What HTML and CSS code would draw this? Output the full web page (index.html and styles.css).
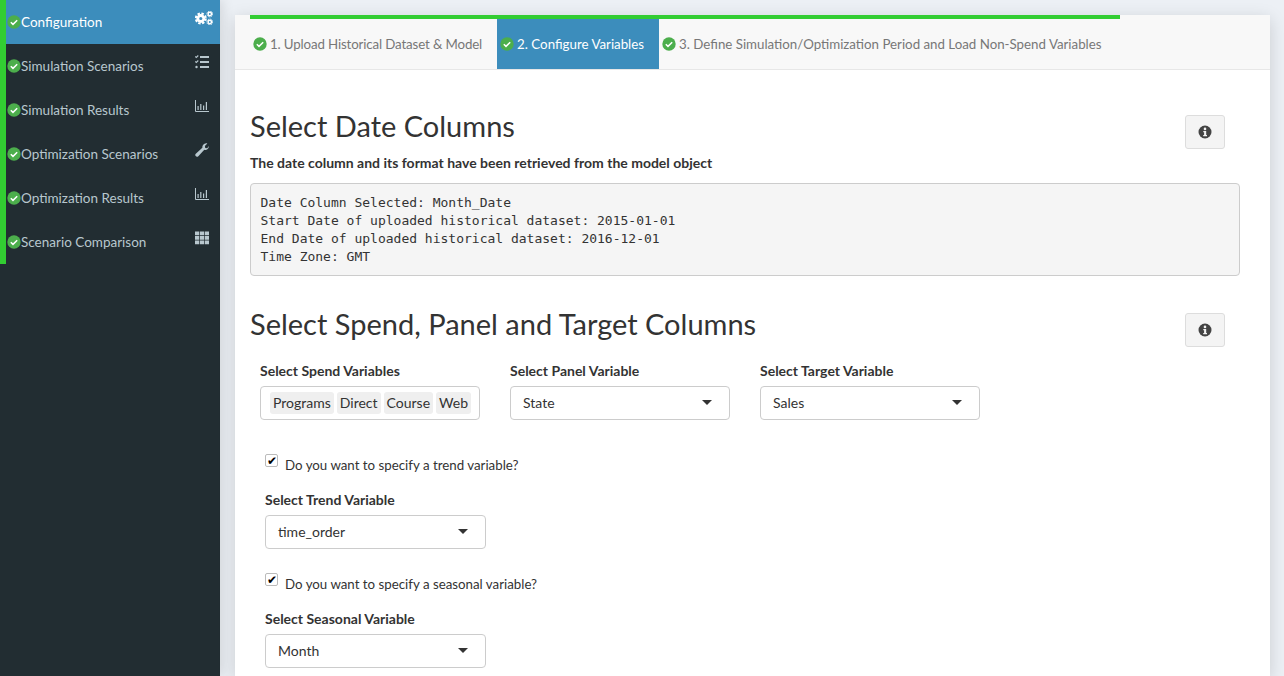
FILE: index.html
```html
<!DOCTYPE html>
<html lang="en">
<head>
    <meta charset="UTF-8">
    <title>Configure Variables</title>
    <link rel="stylesheet" href="styles.css">
</head>
<body>
    <svg class="defs" width="0" height="0">
        <symbol id="ok" viewBox="0 0 14 14">
            <circle cx="7" cy="7" r="6.7" fill="#4cae4c"/>
            <path d="M3.800 7.200l2.200 2.200 4.200-4.200" fill="none" stroke="#fff" stroke-width="1.500"/>
        </symbol>
        <symbol id="chart" viewBox="0 0 18 14" preserveAspectRatio="xMinYMid meet">
            <path fill="none" stroke="currentColor" d="M.5 1v11.500H14"/>
            <path fill="currentColor" d="M2.500 7h1.200v4H2.500zM5.200 5h1.200v6H5.200zM8 6.500h1.200V11H8zM10.800 3h1.200v8h-1.200z"/>
        </symbol>
        <symbol id="info" viewBox="0 0 14 14">
            <circle cx="7" cy="7" r="6.500" fill="currentColor"/>
            <circle cx="7" cy="3.900" r="1.300" fill="#f4f4f4"/>
            <path fill="#f4f4f4" d="M5.300 6h2.900v4h.8v1.300H5.200V10h.9V7.300h-.8z"/>
        </symbol>
    </svg>

    <aside class="sidebar">
        <ul class="menu">
            <li class="menu-item active">
                <svg class="ok"><use href="#ok"/></svg><span class="menu-text">Configuration</span>
                <svg class="menu-icon" viewBox="0 0 18 14" preserveAspectRatio="xMinYMid meet">
                    <g fill="none" stroke="currentColor">
                        <circle cx="5.800" cy="7.500" r="3" stroke-width="2.800"/>
                        <circle cx="5.800" cy="7.500" r="5" stroke-width="2" stroke-dasharray="2.400 1.527"/>
                        <circle cx="14.800" cy="3" r="1.700" stroke-width="1.500"/>
                        <circle cx="14.800" cy="3" r="2.900" stroke-width="1" stroke-dasharray="1.300 1"/>
                        <circle cx="14.800" cy="11" r="1.700" stroke-width="1.500"/>
                        <circle cx="14.800" cy="11" r="2.900" stroke-width="1" stroke-dasharray="1.300 1"/>
                    </g>
                </svg>
            </li>
            <li class="menu-item">
                <svg class="ok"><use href="#ok"/></svg><span class="menu-text">Simulation Scenarios</span>
                <svg class="menu-icon" viewBox="0 0 18 14" preserveAspectRatio="xMinYMid meet">
                    <path fill="currentColor" d="M5 1h9v2H5zM5 6h9v2H5zM5 11h9v2H5z"/>
                    <path fill="none" stroke="currentColor" stroke-width="1.100" d="M.3 1.500l1 1 2-2M.3 6.500l1 1 2-2"/>
                    <circle cx="1.500" cy="12" r="1.200" fill="currentColor"/>
                </svg>
            </li>
            <li class="menu-item">
                <svg class="ok"><use href="#ok"/></svg><span class="menu-text">Simulation Results</span>
                <svg class="menu-icon"><use href="#chart"/></svg>
            </li>
            <li class="menu-item">
                <svg class="ok"><use href="#ok"/></svg><span class="menu-text">Optimization Scenarios</span>
                <svg class="menu-icon" viewBox="0 0 18 14" preserveAspectRatio="xMinYMid meet">
                    <path fill="currentColor" transform="scale(.875)" d="M15.700 3.500c.4 2-1.100 4.300-3.500 4.400-.6 0-1.100-.1-1.600-.3L3.800 15c-1 1-2.300.8-3-.1-.7-.8-.7-1.900.1-2.700l7.500-6.800c-.3-2.300 1.500-4.900 4.400-5 .5 0 1 .1 1.300.2l-2.800 2.700.4 2.300 2.300.5z"/>
                </svg>
            </li>
            <li class="menu-item">
                <svg class="ok"><use href="#ok"/></svg><span class="menu-text">Optimization Results</span>
                <svg class="menu-icon"><use href="#chart"/></svg>
            </li>
            <li class="menu-item">
                <svg class="ok"><use href="#ok"/></svg><span class="menu-text">Scenario Comparison</span>
                <svg class="menu-icon" viewBox="0 0 18 14" preserveAspectRatio="xMinYMid meet">
                    <path fill="currentColor" d="M0 .5h4.200v3.700H0zM4.900 .5h4.200v3.700H4.900zM9.800 .5H14v3.700H9.800zM0 5h4.200v3.700H0zM4.900 5h4.200v3.700H4.900zM9.800 5H14v3.700H9.800zM0 9.500h4.200v3.700H0zM4.900 9.500h4.200v3.700H4.900zM9.800 9.500H14v3.700H9.800z"/>
                </svg>
            </li>
        </ul>
    </aside>

    <main class="main">
        <div class="card">
            <div class="steps">
                <div class="progress"></div>
                <div class="step-row">
                    <div class="step step-first"><svg class="ok"><use href="#ok"/></svg><span class="step-text">1. Upload Historical Dataset &amp; Model</span></div>
                    <div class="step active"><svg class="ok"><use href="#ok"/></svg><span class="step-text">2. Configure Variables</span></div>
                    <div class="step"><svg class="ok"><use href="#ok"/></svg><span class="step-text">3. Define Simulation/Optimization Period and Load Non-Spend Variables</span></div>
                </div>
            </div>

            <div class="card-body">
                <div class="section-head">
                    <h2>Select Date Columns</h2>
                    <button class="info-btn" type="button"><svg><use href="#info"/></svg></button>
                </div>
                <p class="note">The date column and its format have been retrieved from the model object</p>
                <pre class="output">Date Column Selected: Month_Date
Start Date of uploaded historical dataset: 2015-01-01
End Date of uploaded historical dataset: 2016-12-01
Time Zone: GMT</pre>

                <div class="section-head section-two">
                    <h2>Select Spend, Panel and Target Columns</h2>
                    <button class="info-btn" type="button"><svg><use href="#info"/></svg></button>
                </div>

                <div class="columns">
                    <div class="field">
                        <div class="field-label">Select Spend Variables</div>
                        <div class="select tags">
                            <span class="tag">Programs</span><span class="tag">Direct</span><span class="tag">Course</span><span class="tag">Web</span>
                        </div>
                    </div>
                    <div class="field">
                        <div class="field-label">Select Panel Variable</div>
                        <div class="select">State<span class="caret"></span></div>
                    </div>
                    <div class="field">
                        <div class="field-label">Select Target Variable</div>
                        <div class="select">Sales<span class="caret"></span></div>
                    </div>
                </div>

                <div class="options">
                    <div class="check-row"><span class="check">&#10004;</span>Do you want to specify a trend variable?</div>
                    <div class="field-label">Select Trend Variable</div>
                    <div class="select select-wide">time_order<span class="caret"></span></div>

                    <div class="check-row"><span class="check">&#10004;</span>Do you want to specify a seasonal variable?</div>
                    <div class="field-label">Select Seasonal Variable</div>
                    <div class="select select-wide">Month<span class="caret"></span></div>
                </div>
            </div>
        </div>
    </main>
</body>
</html>
```

FILE: styles.css
```css
* {
    box-sizing: border-box;
}

html, body {
    height: 100%;
}

body {
    margin: 0;
    display: flex;
    overflow: hidden;
    font-family: 'Lato', 'Noto Sans', sans-serif;
    font-size: 14px;
    color: #333;
    background: #ecf0f5;
}

.defs {
    position: absolute;
}

.ok {
    width: 14px;
    height: 14px;
    flex: none;
}

/* Sidebar */
.sidebar {
    width: 220px;
    flex: none;
    background: #222d32;
    box-shadow: 2px 0 12px rgba(0, 0, 0, 0.12);
}

.menu {
    list-style: none;
    margin: 0;
    padding: 0;
    border-left: 6px solid #32cd32;
}

.menu-item {
    height: 44px;
    display: flex;
    align-items: center;
    padding: 0 7px 0 1px;
    color: #b8c7ce;
}

.menu-item.active {
    background: #3c8dbc;
    color: #fff;
}

.menu-text {
    flex: 1;
    font-size: 13.5px;
    margin-bottom: 1px;
}

.menu-icon {
    width: 18px;
    height: 14px;
    margin-bottom: 8px;
}

/* Card */
.main {
    flex: 1;
    padding: 15px 14px 0 15px;
    min-width: 0;
}

.card {
    background: #fff;
    height: 100%;
    box-shadow: 0 4px 16px rgba(0, 0, 0, 0.15);
}

.steps {
    height: 55px;
    padding-left: 15px;
    background: #f8f8f8;
    border-bottom: 1px solid #e7e7e7;
}

.progress {
    width: 870px;
    height: 4px;
    background: #32cd32;
}

.step-row {
    display: flex;
    height: 50px;
}

.step {
    display: flex;
    align-items: center;
    gap: 3px;
    padding: 0 15px 0 3px;
    color: #777;
    font-size: 13.3px;
}

.step-first {
    letter-spacing: -0.14px;
}

.step-text {
    margin-bottom: 1px;
}

.step.active {
    background: #3c8dbc;
    color: #fff;
}

/* Sections */
.card-body {
    padding: 0 15px;
}

.section-head {
    display: flex;
    justify-content: space-between;
    align-items: flex-start;
    padding: 38px 30px 0 0;
    height: 83px;
}

.section-two {
    padding-top: 30px;
    height: 85px;
}

h2 {
    margin: 0;
    font-size: 29px;
    font-weight: 400;
    line-height: 36px;
}

.info-btn {
    width: 40px;
    height: 34px;
    margin-top: 7px;
    padding: 0;
    background: #f4f4f4;
    border: 1px solid #ddd;
    border-radius: 3px;
    color: #444;
    display: flex;
    align-items: center;
    justify-content: center;
}

.info-btn svg {
    width: 14px;
    height: 14px;
}

.note {
    margin: 0 0 10px;
    font-weight: 700;
    line-height: 20px;
}

.output {
    width: 990px;
    margin: 0;
    padding: 9.5px;
    font-family: 'DejaVu Sans Mono', monospace;
    font-size: 13px;
    line-height: 18px;
    color: #333;
    background: #f5f5f5;
    border: 1px solid #ccc;
    border-radius: 4px;
}

/* Inputs */
.columns {
    display: flex;
    gap: 30px;
    padding-left: 10px;
}

.field {
    width: 220px;
}

.field-label {
    font-weight: 700;
    line-height: 20px;
    margin-bottom: 5px;
}

.select {
    position: relative;
    height: 34px;
    display: flex;
    align-items: center;
    padding: 0 0 2px 12px;
    background: #fff;
    border: 1px solid #ccc;
    border-radius: 4px;
}

.select-wide {
    width: 221px;
}

.caret {
    position: absolute;
    top: 13px;
    right: 17px;
    border-top: 5px solid #333;
    border-left: 5.5px solid transparent;
    border-right: 5.5px solid transparent;
}

.tags {
    padding: 0 0 0 9px;
    gap: 3px;
}

.tag {
    padding: 0 3px;
    line-height: 22px;
    background: #efefef;
    border-radius: 3px;
}

.options {
    padding: 33px 0 0 15px;
}

.check-row {
    display: flex;
    align-items: flex-end;
    height: 20px;
    margin-bottom: 17px;
    font-size: 13.3px;
}

.select-wide + .check-row {
    margin-top: 23px;
}

.check {
    width: 13px;
    height: 13px;
    margin: 0 7px 6px 0;
    border: 1px solid #bbb;
    border-radius: 2px;
    background: #fff;
    color: #000;
    font-size: 12px;
    line-height: 11px;
    text-align: center;
}
```
